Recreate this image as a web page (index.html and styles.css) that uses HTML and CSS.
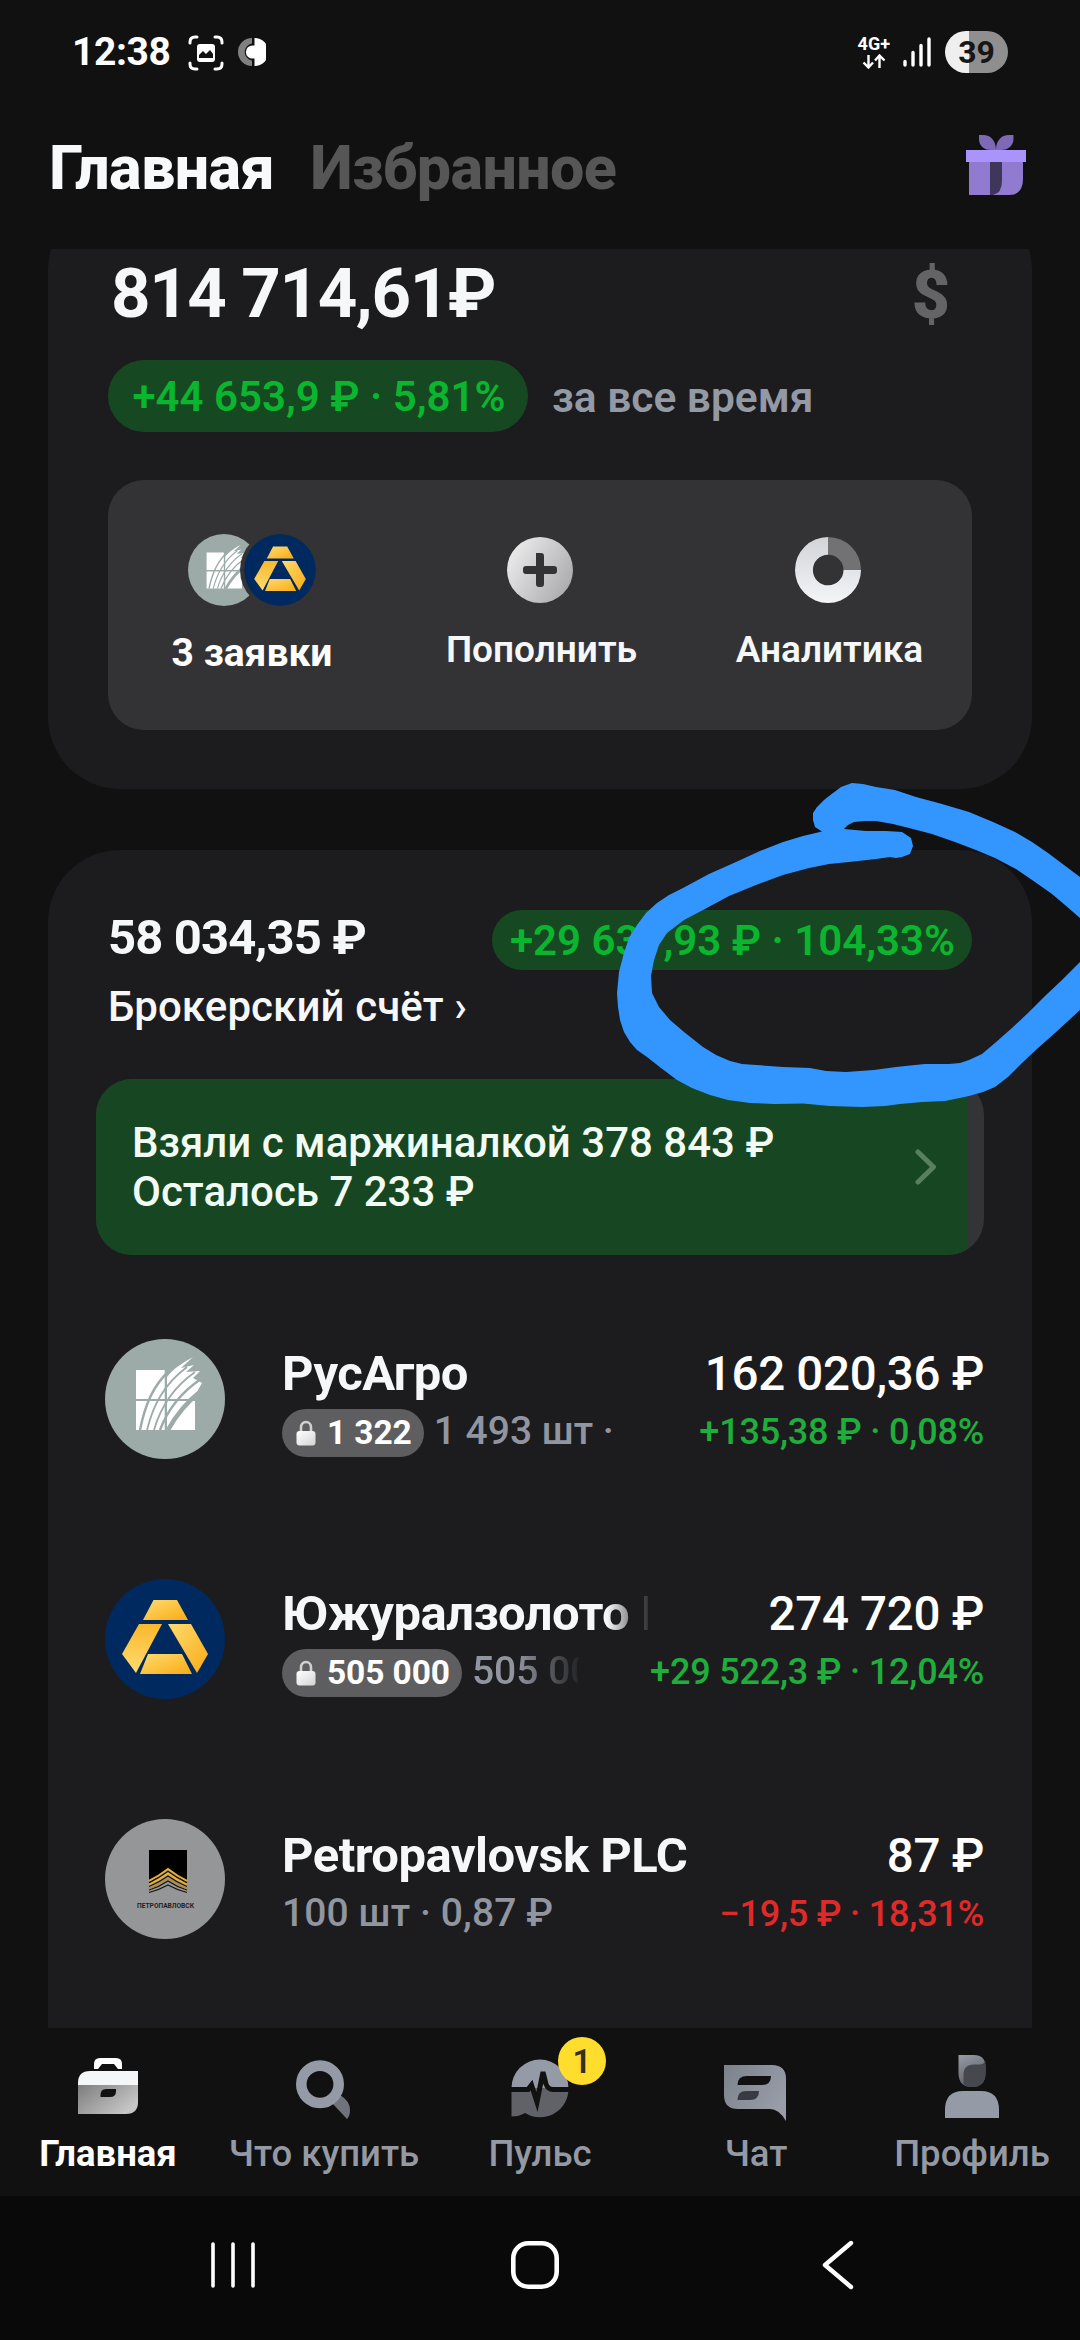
FILE: index.html
```html
<!DOCTYPE html>
<html lang="ru">
<head>
<meta charset="utf-8">
<title>Главная</title>
<link rel="stylesheet" href="styles.css">
</head>
<body>
<svg class="defs" width="0" height="0" aria-hidden="true">
  <defs>
    <linearGradient id="gold" x1="0" y1="0" x2="1" y2="1"><stop offset="0" stop-color="#ffdb70"/><stop offset="1" stop-color="#f9ab14"/></linearGradient>
    <linearGradient id="goldLeft" x1="0" y1="0" x2="0" y2="1"><stop offset="0" stop-color="#f9b82c"/><stop offset="1" stop-color="#ffdc72"/></linearGradient>
    <linearGradient id="silver" x1="0" y1="0.2" x2="1" y2="0.8"><stop offset="0" stop-color="#ededee"/><stop offset="1" stop-color="#a9a9ab"/></linearGradient>
    <linearGradient id="ring" x1="0" y1="0" x2="0" y2="1"><stop offset="0" stop-color="#d2d4d7"/><stop offset="1" stop-color="#f4f5f7"/></linearGradient>
    <linearGradient id="case" x1="0" y1="0" x2="1" y2="0.6"><stop offset="0" stop-color="#7d7d7d"/><stop offset="1" stop-color="#c6c6c6"/></linearGradient>
    <linearGradient id="lockFill" x1="0" y1="0" x2="1" y2="1"><stop offset="0" stop-color="#ffffff"/><stop offset="1" stop-color="#d4d4d4"/></linearGradient>
    <linearGradient id="chat" x1="0" y1="0" x2="1" y2="0.6"><stop offset="0" stop-color="#7c838d"/><stop offset="1" stop-color="#989da8"/></linearGradient>
    <linearGradient id="head" x1="0" y1="0" x2="0.4" y2="1"><stop offset="0" stop-color="#969ba6"/><stop offset="1" stop-color="#5d6067"/></linearGradient>
    <symbol id="rusagro" viewBox="0 0 120 120">
      <circle cx="60" cy="60" r="60" fill="#9caba8"/>
      <path d="M31 31H60V60H31ZM31 62H60V91H31ZM62 62H90V91H62ZM62 60V38Q68 29 88 18L76 29L89 26L81 33L95 32L88 39L97 44L93 51L94 55L90 60Z" fill="#fff"/>
      <g fill="none" stroke="#9caba8" stroke-width="2.4">
        <path d="M35 91C40 66 48 46 66 30"/><path d="M42 91C48 67 58 46 82 28" stroke-width="1.8"/>
        <path d="M49 91C55 70 66 50 90 33" stroke-width="1.8"/><path d="M55 91C63 70 75 54 96 40"/>
        <path d="M63 91C71 76 82 63 97 51" stroke-width="4.5"/>
        <path d="M60.7 30V91M31 61H98" stroke-width="2"/>
      </g>
    </symbol>
    <symbol id="uzhural" viewBox="0 0 120 120">
      <circle cx="60" cy="60" r="60" fill="#002a5f"/>
      <path d="M48.5 21H72L83 41H38Z" fill="url(#gold)"/>
      <path d="M34 45H57L31 94L17 75Z" fill="url(#goldLeft)"/>
      <path d="M63 45H86L103 75L92 94Z" fill="url(#gold)"/>
      <path d="M43 75H77L87 95H35Z" fill="url(#gold)"/>
    </symbol>
    <symbol id="lock" viewBox="0 0 20 26">
      <path d="M5 12V7.5C5 0.2 15 0.2 15 7.5V12" fill="none" stroke="#d0d0d0" stroke-width="2.6"/>
      <rect x="0.5" y="11" width="19" height="14.5" rx="3" fill="url(#lockFill)"/>
    </symbol>
  </defs>
</svg>

<div class="screen">
  <div class="status">
    <span class="time">12:38</span>
    <svg class="status-scan" viewBox="0 0 36 36"><g fill="none" stroke="#fff" stroke-width="3" stroke-linecap="round"><path d="M2 8V7Q2 2 7 2H9M27 2H29Q34 2 34 7V8M34 28V29Q34 34 29 34H27M9 34H7Q2 34 2 29V28"/></g><rect x="9" y="9" width="18" height="18" rx="3" fill="#fff"/><path d="M11 23V20L15 16L18 19L22 15L25 19V23Z" fill="#111"/></svg>
    <svg class="status-ring" viewBox="0 0 28 28"><path d="M14 0A14 14 0 0 0 14 28V22.500A8.600 8.600 0 0 1 14 5.500Z" fill="#808080"/><path d="M16.500 0A14 14 0 0 1 16.500 28V20.500A6.600 6.600 0 0 1 16.500 7.500Z" fill="#fff"/><circle cx="14.500" cy="14" r="6.600" fill="#fff"/></svg>
    <div class="network"><span>4G+</span><svg viewBox="0 0 24 15"><path d="M6.500 1V13M1.500 8.500L6.500 13.500L11 8.500M17.500 14V2M13 6.500L17.500 1.500L22.500 6.500" fill="none" stroke="#fff" stroke-width="2.4"/></svg></div>
    <svg class="signal" viewBox="0 0 28 30"><path d="M2 24.500V28M10 15.500V28M18 8.500V28M26 2V28" stroke="#fff" stroke-width="3.400" stroke-linecap="round"/></svg>
    <span class="battery">39</span>
  </div>

  <header class="tabs">
    <span class="tab tab-active">Главная</span>
    <span class="tab">Избранное</span>
    <svg class="gift" viewBox="0 0 60 60"><path d="M13 0H17C25 0 30 6 30 15H25C17 15 13 10 13 4ZM47.500 0H43C35 0 30 6 30 15H35C43 15 47.500 10 47.500 4Z" fill="#7d69b6"/><path d="M3 27H57V44Q57 60 43 60H3Z" fill="#917bd0"/><path d="M24 27H36V46Q36 58 27 60H24Z" fill="#3f365c"/><path d="M0 15H60V27H0Z" fill="#aa94fb"/></svg>
  </header>

  <main class="feed">
    <section class="card total">
      <div class="total-row"><span class="sum">814 714,61₽</span><span class="currency">$</span></div>
      <div class="total-change"><span class="pill pill-large">+44 653,9 ₽ · 5,81%</span><span class="period">за все время</span></div>
      <div class="actions">
        <div class="action"><div class="logos"><svg class="logo-back"><use href="#rusagro"/></svg><svg class="logo-front"><use href="#uzhural"/></svg></div><span class="action-label orders">3 заявки</span></div>
        <div class="action"><div class="logos"><svg class="action-icon" viewBox="0 0 66 66"><circle cx="33" cy="33" r="33" fill="url(#silver)"/><path d="M29 16H34Q37 16 37 19V29H47Q50 29 50 32V34Q50 37 47 37H37V47Q37 50 34 50H32Q29 50 29 47V37H19Q16 37 16 34V32Q16 29 19 29H29Z" fill="#333335"/></svg></div><span class="action-label">Пополнить</span></div>
        <div class="action"><div class="logos"><svg class="action-icon" viewBox="0 0 66 66"><path d="M33 0A33 33 0 1 0 66 33H48.500A15.300 15.300 0 1 1 33 17.700Z" fill="url(#ring)"/><path d="M33 0A33 33 0 0 1 66 33H48.500A15.500 15.300 0 0 0 33 17.700Z" fill="#727274"/></svg></div><span class="action-label">Аналитика</span></div>
      </div>
    </section>

    <section class="card account">
      <div class="account-head"><span class="account-sum">58 034,35 ₽</span><span class="pill">+29 637,93 ₽ · 104,33%</span></div>
      <div class="account-name">Брокерский счёт ›</div>
      <div class="margin">
        <div class="margin-fill">
          <p class="margin-text">Взяли с маржиналкой 378 843 ₽<br>Осталось 7 233 ₽</p>
          <svg class="chevron" viewBox="0 0 22 36"><path d="M3 3L18.500 18L3 33" fill="none" stroke="#56805f" stroke-width="5" stroke-linecap="round" stroke-linejoin="round"/></svg>
        </div>
      </div>
      <div class="positions">
        <div class="position">
          <svg class="logo"><use href="#rusagro"/></svg>
          <div class="info"><span class="name">РусАгро</span><div class="meta"><span class="locked"><svg class="lock"><use href="#lock"/></svg>1 322</span><span class="qty">1 493 шт ·</span></div></div>
          <div class="value"><span class="amount">162 020,36 ₽</span><span class="change up">+135,38 ₽ · 0,08%</span></div>
        </div>
        <div class="position">
          <svg class="logo"><use href="#uzhural"/></svg>
          <div class="info"><span class="name name-cut">Южуралзолото ЮГК</span><div class="meta"><span class="locked"><svg class="lock"><use href="#lock"/></svg>505 000</span><span class="qty qty-cut">505 00</span></div></div>
          <div class="value"><span class="amount">274 720 ₽</span><span class="change up">+29 522,3 ₽ · 12,04%</span></div>
        </div>
        <div class="position position-last">
          <svg class="logo" viewBox="0 0 120 120"><circle cx="60" cy="60" r="60" fill="#949698"/><path d="M44 31H82V66L73 58L63 50L53 58L44 66Z" fill="#000"/><g fill="none" stroke="#e9ae3a" stroke-width="2.200"><path d="M44 62Q54 57 63 50Q72 57 82 62"/><path d="M44 65.500Q54 61 63 54.500Q72 61 82 65.500"/></g><g fill="none" stroke="#17130b" stroke-width="1.200"><path d="M44 63.800Q54 59 63 52.300Q72 59 82 63.800"/><path d="M44 67.500Q54 63.500 63 57Q72 63.500 82 67.500"/><path d="M44 71Q54 68 63 62Q72 68 82 71"/><path d="M44 73.500Q54 71 63 66Q72 71 82 73.500"/></g><path d="M44 69.500Q54 65.500 63 59.500Q72 65.500 82 69.500" fill="none" stroke="#b88c35" stroke-width="1.600"/><text x="32" y="89" font-size="7.500" font-weight="700" textLength="57" lengthAdjust="spacingAndGlyphs" fill="#222">ПЕТРОПАВЛОВСК</text></svg>
          <div class="info"><span class="name">Petropavlovsk PLC</span><div class="meta"><span class="qty qty-alone">100 шт · 0,87 ₽</span></div></div>
          <div class="value"><span class="amount">87 ₽</span><span class="change down">−19,5 ₽ · 18,31%</span></div>
        </div>
      </div>
    </section>
  </main>

  <nav class="bottom">
    <div class="item item-active"><svg class="item-icon" viewBox="0 0 72 72"><path d="M22 17V12Q22 6 28 6H44Q50 6 50 12V17H46L42 12H30L26 17Z" fill="#fff"/><path d="M6 34V31Q6 19 18 19H66V34Z" fill="#f5f6f7"/><path d="M6 33H66V50Q66 62 54 62H6Z" fill="url(#case)"/><path d="M28.500 45V43Q28.500 37 34 37H44V39Q44 45 38 45Z" fill="#111"/></svg><span>Главная</span></div>
    <div class="item"><svg class="item-icon" viewBox="0 0 72 72"><path d="M52 43Q62 49 62 58Q62 64 59 67L44 51Z" fill="#6f737b"/><circle cx="32" cy="32.300" r="18.700" fill="none" stroke="#959ba6" stroke-width="10.600"/></svg><span>Что купить</span></div>
    <div class="item"><svg class="item-icon" viewBox="0 0 72 72"><path d="M7.500 36A28.500 28.500 0 0 1 64.500 36Z" fill="#959ba6"/><path d="M7.500 36H64.500A28.500 28.500 0 0 1 21 61Q15 64.500 7.500 64.500Z" fill="#606267"/><path d="M7 37.500H24L27.500 33L33 50L39 20L42 32Q44 37.500 49 37.500H66" fill="none" stroke="#111" stroke-width="5"/></svg><span>Пульс</span><b class="badge">1</b></div>
    <div class="item"><svg class="item-icon" viewBox="0 0 72 72"><path d="M4 13H52Q66 13 66 27V69Q59 57 50 57H18Q4 57 4 43Z" fill="url(#chat)"/><path d="M17.500 33Q17.500 24 27 24H51Q51 33 42 33Z" fill="#111"/><path d="M17.500 48Q17.500 39 26 39H39Q39 48 30 48Z" fill="#3a3b42"/></svg><span>Чат</span></div>
    <div class="item"><svg class="item-icon" viewBox="0 0 72 72"><path d="M22.500 3H38Q49.500 3 49.500 15V21Q49.500 35 36 35Q22.500 35 22.500 21Z" fill="url(#head)"/><path d="M27.500 32V23Q27.500 12.500 38 12.500H44Q48 12 49.300 9Q49.500 12 49.500 21Q49.500 35 36 35Q31 35 27.500 32Z" fill="#46484e"/><path d="M9 66V58Q9 39 27 39H45Q63 39 63 58V66Z" fill="#959ba6"/></svg><span>Профиль</span></div>
  </nav>

  <div class="system">
    <svg class="recents" viewBox="0 0 44 46"><path d="M2 2V44M22 2V44M42 2V44" stroke="#fff" stroke-width="3.600" stroke-linecap="round"/></svg>
    <svg class="home" viewBox="0 0 48 48"><rect x="2.300" y="2.300" width="43.400" height="43.400" rx="15" fill="none" stroke="#fff" stroke-width="4.600"/></svg>
    <svg class="back" viewBox="0 0 32 50"><path d="M29 3L3 25L29 47" fill="none" stroke="#fff" stroke-width="4.400" stroke-linecap="round" stroke-linejoin="round"/></svg>
  </div>

  <svg class="marker" viewBox="0 0 1080 2340"><path fill-rule="evenodd" d="M852 783L863 784L876 787L895 790L916 797L942 804L969 812L993 822L1015 832L1032 842L1048 853L1064 865L1080 877L1110 930L1080 1010L1055 1033L1038 1048L1022 1063L1008 1077L995 1087L983 1092L969 1096L945 1101L922 1102L900 1104L885 1106L862 1107L830 1106L803 1103.500L775 1104L750 1103L728 1100L710 1095L692 1088L677 1080L661 1068L647 1057L637 1050L630 1042L624 1032L620 1020L618 1007L617 993L619 972L624 953L629 938L637 925L646 913L657 903L669 895L683 888L709 874L736 862L760 851L783 842L803 836L822 831.500L815 827L813 820L813 813L817 807L824 800L833 793L841 787Z
M844 829L848 825L854 822L865 821L876 821L893 824L909 828L932 834L955 842L976 850L995 858L1016 869L1035 882L1052 894L1065 905L1080 918L1085 940L1080 962L1062 980L1045 996L1028 1013L1012 1028L995 1043L982 1054L969 1060L960 1063L949 1064L925 1064L896 1067L874 1070L846 1072L826 1071L810 1068L783 1067L756 1065L742 1064L730 1061L716 1055L703 1047L684 1032L670 1020L659 1007L652 993L651 976L654 960L659 945L667 933L684 920L703 910L729 896L756 885L783 875L809 868L829 864L849 862L876 859L890 857L896 858L902 857L910 854L913 846L911 838L902 832L886 831L866 831Z"/></svg>
</div>
</body>
</html>
```
FILE: styles.css
```css
* { box-sizing: border-box; }
body { margin: 0; background: #111; color: #f6f7f9; font-family: Roboto, "Noto Sans", sans-serif; }
svg { display: block; flex: none; }
.defs { position: absolute; }
.screen { position: relative; width: 1080px; height: 2340px; display: flex; flex-direction: column; overflow: hidden; white-space: nowrap; }

.status { height: 104px; flex: none; display: flex; align-items: center; padding: 0 72px 0 72px; color: #fff; }
.time { font-size: 39px; font-weight: 700; width: 116px; line-height: 104px; letter-spacing: -0.4px; }
.status-scan { width: 36px; height: 36px; margin-top: 1px; }
.status-ring { width: 28px; height: 28px; margin-left: 14px; }
.network { margin-left: auto; display: flex; flex-direction: column; align-items: center; font-size: 18px; font-weight: 700; line-height: 18px; gap: 1px; }
.network svg { width: 24px; height: 15px; }
.signal { width: 28px; height: 30px; margin-left: 13px; }
.battery { width: 63px; height: 42px; margin-left: 14px; border-radius: 21px; background: linear-gradient(90deg, #efefef 24px, #8f8f8f 24px); color: #161616; font-size: 32px; font-weight: 700; line-height: 42px; text-align: center; }

.tabs { height: 145px; flex: none; display: flex; align-items: flex-start; padding: 28px 54px 0 49px; }
.tab { font-size: 61px; font-weight: 800; line-height: 72px; letter-spacing: -0.6px; color: #565656; margin-right: 36px; }
.tab-active { color: #f8f9fa; }
.gift { width: 60px; height: 60px; margin: 3px 0 0 auto; }

.feed { flex: 1; min-height: 0; overflow: hidden; padding: 0 48px; display: flex; flex-direction: column; }
.card { background: #1c1c1e; flex: none; }
.total { margin-top: -51px; height: 591px; border-radius: 72px; padding: 56px 60px 0; }
.total-row { display: flex; justify-content: space-between; height: 80px; line-height: 80px; font-weight: 700; }
.sum { font-size: 69px; letter-spacing: -1.4px; margin-left: 3px; }
.currency { font-size: 66px; font-weight: 900; line-height: 83px; color: #646466; margin-right: 22px; }
.total-change { display: flex; margin-top: 26px; gap: 24px; height: 72px; }
.pill { height: 60px; border-radius: 30px; padding: 1px 17px 0 18px; width: 480px; background: #164921; color: #0bb52f; font-size: 42px; font-weight: 600; line-height: 60px; text-align: center; }
.pill-large { width: 420px; height: 72px; border-radius: 36px; line-height: 72px; padding: 1px 17px 0 19px; }
.period { font-size: 42.5px; font-weight: 600; line-height: 75px; color: #9399a5; }
.actions { margin-top: 48px; height: 250px; border-radius: 36px; background: #333335; display: grid; grid-template-columns: repeat(3, 1fr); padding-top: 54px; }
.action { display: flex; flex-direction: column; align-items: center; }
.logos { height: 72px; display: flex; align-items: center; }
.logo-back { width: 72px; height: 72px; margin-right: -16px; }
.logo-front { width: 72px; height: 72px; border-radius: 50%; background: #333335; box-shadow: 0 0 0 4px #333335; }
.action-icon { width: 66px; height: 66px; }
.action-label { font-size: 37px; font-weight: 600; line-height: 44px; margin: 22px 0 0 3px; }
.orders { font-size: 39px; font-weight: 700; margin: 25px 0 0 0; color: #fff; }

.account { margin-top: 61px; height: 1300px; border-radius: 72px 72px 0 0; padding: 60px 48px 0; }
.account-head { display: flex; justify-content: space-between; padding: 0 12px; height: 60px; }
.account-sum { font-size: 49px; font-weight: 700; line-height: 56px; letter-spacing: -0.9px; }
.account-name { margin: 13px 0 0 12px; font-size: 42px; font-weight: 500; line-height: 48px; letter-spacing: 0.1px; }
.margin { margin-top: 48px; height: 176px; border-radius: 36px; background: #343436; overflow: hidden; }
.margin-fill { width: 871px; height: 176px; background: #164722; display: flex; justify-content: space-between; align-items: center; padding: 0 30px 0 36px; }
.margin-text { margin: 0; font-size: 42px; font-weight: 500; line-height: 49px; color: #f1fbf3; }
.chevron { width: 22px; height: 36px; }

.positions { margin-top: 24px; }
.position { height: 240px; display: flex; padding-left: 9px; align-items: flex-start; }
.position-last { height: 242px; }
.logo { width: 120px; height: 120px; margin-top: 60px; }
.info { margin: 65px 0 0 57px; }
.name { display: block; font-size: 49px; font-weight: 700; line-height: 60px; letter-spacing: -0.55px; }
.name-cut { width: 366px; overflow: hidden; -webkit-mask-image: linear-gradient(90deg, #000 325px, transparent 371px); mask-image: linear-gradient(90deg, #000 325px, transparent 371px); }
.meta { display: flex; gap: 10px; height: 48px; margin-top: 5px; }
.locked { height: 48px; display: flex; align-items: center; gap: 11px; padding: 0 12px 0 14px; border-radius: 24px; background: #5e5e60; color: #fff; font-size: 33.5px; font-weight: 700; line-height: 48px; letter-spacing: -0.1px; }
.lock { width: 20px; height: 26px; }
.qty { font-size: 39px; font-weight: 500; line-height: 44px; color: #9195a0; }
.qty-cut { width: 106px; overflow: hidden; -webkit-mask-image: linear-gradient(90deg, #000 45px, transparent 112px); mask-image: linear-gradient(90deg, #000 45px, transparent 112px); }
.value { margin: 65px 0 0 auto; display: flex; flex-direction: column; align-items: flex-end; }
.amount { font-size: 47.5px; font-weight: 500; line-height: 60px; letter-spacing: -0.3px; color: #fff; }
.change { margin-top: 4px; font-size: 36px; font-weight: 500; line-height: 48px; letter-spacing: -0.2px; }
.position-last .info, .position-last .value { padding-top: 2px; }
.qty-alone { letter-spacing: 0.1px; }
.up { color: #1fae3b; }
.down { color: #e02a2a; }

.bottom { height: 168px; flex: none; display: grid; grid-template-columns: repeat(5, 1fr); padding-top: 24px; background: #111; }
.item { position: relative; display: flex; flex-direction: column; align-items: center; color: #9499a3; font-size: 36.5px; font-weight: 500; line-height: 44px; }
.item-active { color: #fff; font-weight: 700; }
.item-icon { width: 72px; height: 72px; margin-bottom: 8px; }
.badge { position: absolute; left: 126px; top: -15px; width: 48px; height: 48px; border-radius: 50%; background: #ffdd2d; color: #33301c; font-size: 33px; line-height: 49px; text-align: center; font-weight: 600; }

.system { height: 144px; flex: none; display: flex; align-items: center; padding: 0 0 7px 211px; background: #090909; }
.recents { width: 44px; height: 46px; }
.home { width: 48px; height: 48px; margin-left: 256px; }
.back { width: 32px; height: 50px; margin-left: 263px; }

.marker { position: absolute; left: 0; top: 0; width: 1080px; height: 2340px; fill: #3396ff; pointer-events: none; }
```
